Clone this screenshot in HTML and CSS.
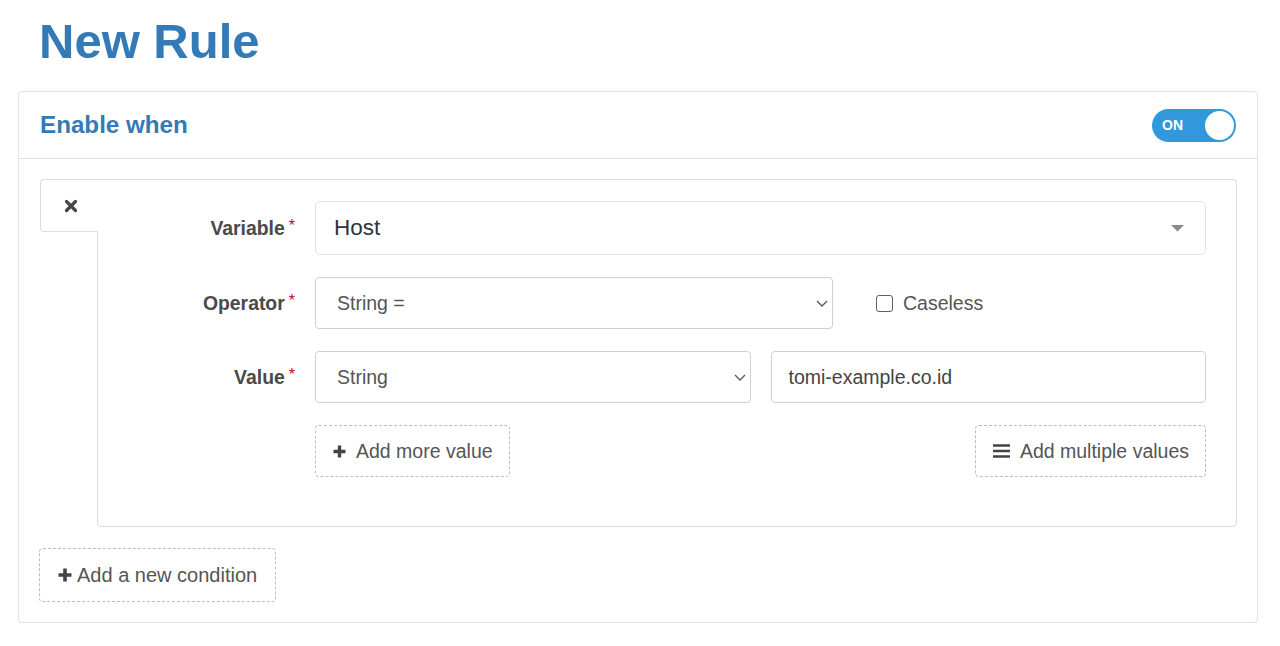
FILE: index.html
```html
<!DOCTYPE html>
<html lang="en">
<head>
<meta charset="utf-8">
<title>New Rule</title>
<link rel="stylesheet" href="styles.css">
</head>
<body>
<div class="page">
  <h1 class="title">New Rule</h1>
  <section class="panel">
    <header class="panel-head">
      <h2 class="panel-title">Enable when</h2>
      <div class="toggle"><span class="toggle-label">ON</span><span class="toggle-knob"></span></div>
    </header>
    <div class="panel-body">
      <div class="condition">
        <div class="cond-tab">
          <svg class="ico-x" width="14" height="14" viewBox="0 0 14 14"><path d="M2.5 2.5L11.5 11.5M11.5 2.5L2.5 11.5" stroke="#454545" stroke-width="3.2" stroke-linecap="round"/></svg>
        </div>
        <div class="cond-main">
          <div class="field-label">Variable<span class="req">*</span></div>
          <div class="field-ctrl">
            <div class="select select-lg">
              <span>Host</span>
              <svg width="13" height="7" viewBox="0 0 13 7"><polygon points="0,0 13,0 6.5,6.5" fill="#8a8a8a"/></svg>
            </div>
          </div>

          <div class="field-label">Operator<span class="req">*</span></div>
          <div class="field-ctrl">
            <div class="select select-md select-op">
              <span>String =</span>
              <svg class="chev" width="12" height="7" viewBox="0 0 12 7"><polyline points="1,1 6,6 11,1" fill="none" stroke="#555" stroke-width="1.3"/></svg>
            </div>
            <label class="check"><span class="check-box"></span>Caseless</label>
          </div>

          <div class="field-label">Value<span class="req">*</span></div>
          <div class="field-pair">
            <div class="select select-md">
              <span>String</span>
              <svg class="chev" width="12" height="7" viewBox="0 0 12 7"><polyline points="1,1 6,6 11,1" fill="none" stroke="#555" stroke-width="1.3"/></svg>
            </div>
            <div class="text-input">tomi-example.co.id</div>
          </div>

          <div class="field-label"></div>
          <div class="field-ctrl split">
            <button class="dash-btn">
              <svg width="13" height="13" viewBox="0 0 13 13"><path d="M6.5 0.5v12M0.5 6.5h12" stroke="#444" stroke-width="3.4"/></svg>
              Add more value
            </button>
            <button class="dash-btn">
              <svg width="17" height="14" viewBox="0 0 17 14"><path d="M0 1.5h17M0 7h17M0 12.5h17" stroke="#444" stroke-width="2.6"/></svg>
              Add multiple values
            </button>
          </div>
        </div>
      </div>
      <button class="dash-btn new-cond">
        <svg width="14" height="14" viewBox="0 0 14 14"><path d="M7 0.5v13M0.5 7h13" stroke="#444" stroke-width="3.6"/></svg>
        Add a new condition
      </button>
    </div>
  </section>
</div>
</body>
</html>
```

FILE: styles.css
```css
* { box-sizing: border-box; }

body {
  margin: 0;
  background: #fff;
  font-family: "Liberation Sans", Arial, Helvetica, sans-serif;
  color: #555;
}

.page {
  padding: 14px 22px 0 18px;
}

.title {
  margin: 0 0 22px 21px;
  font-size: 49px;
  line-height: 55px;
  font-weight: bold;
  color: #337ab7;
}

.panel {
  border: 1px solid #e4e4e4;
  border-radius: 4px;
  background: #fff;
  box-shadow: 0 1px 2px rgba(0, 0, 0, 0.05);
}

.panel-head {
  height: 67px;
  display: flex;
  align-items: center;
  justify-content: space-between;
  padding: 0 21px 0 21px;
  border-bottom: 1px solid #dedede;
}

.panel-title {
  margin: 0;
  font-size: 24.2px;
  font-weight: bold;
  color: #337ab7;
}

.toggle {
  width: 84px;
  height: 33px;
  border-radius: 17px;
  background: #3198dc;
  display: flex;
  align-items: center;
  justify-content: space-between;
  padding: 0 2px 0 10px;
}

.toggle-label {
  color: #fff;
  font-weight: bold;
  font-size: 14px;
}

.toggle-knob {
  width: 29px;
  height: 29px;
  border-radius: 50%;
  background: #fff;
}

.panel-body {
  padding: 20px 20px 20px 21px;
}

.condition {
  display: flex;
  align-items: flex-start;
}

.cond-tab {
  position: relative;
  z-index: 1;
  width: 58px;
  height: 53px;
  margin-right: -1px;
  border: 1px solid #dcdcdc;
  border-right: none;
  border-radius: 4px 0 0 4px;
  background: #fff;
  display: flex;
  align-items: center;
  justify-content: center;
  padding-left: 2px;
}

.cond-main {
  flex: 1;
  border: 1px solid #dcdcdc;
  border-radius: 0 4px 4px 4px;
  padding: 21px 30px 49px 0;
  display: grid;
  grid-template-columns: 197px 1fr;
  column-gap: 20px;
  row-gap: 22px;
}

.field-label {
  display: flex;
  align-items: center;
  justify-content: flex-end;
  font-size: 19.4px;
  font-weight: bold;
  color: #4a4a4a;
}

.req {
  color: #d0021b;
  font-size: 16px;
  margin-left: 4px;
  margin-bottom: 4px;
  font-weight: normal;
}

.field-ctrl {
  display: flex;
  align-items: center;
}

.field-pair {
  display: grid;
  grid-template-columns: 1fr 1fr;
  column-gap: 20px;
}

.field-ctrl.split { justify-content: space-between; }

.select {
  display: flex;
  align-items: center;
  justify-content: space-between;
  border: 1px solid #cfcfcf;
  border-radius: 4px;
  background: #fff;
}

.select-lg {
  flex: 1;
  height: 54px;
  padding: 0 21px 0 18px;
  font-size: 22.5px;
  color: #2c3440;
  border-color: #e3e3e3;
  border-radius: 5px;
}

.select-md {
  height: 52px;
  padding: 0 4px 0 21px;
  font-size: 19.5px;
  color: #555;
}

.select-op { width: 518px; }

.check {
  display: flex;
  align-items: center;
  margin-left: 43px;
  font-size: 19.5px;
  color: #555;
}

.check-box {
  width: 17px;
  height: 17px;
  border: 1.5px solid #5f5f5f;
  border-radius: 3px;
  margin-right: 10px;
}

.text-input {
  height: 52px;
  display: flex;
  align-items: center;
  border: 1px solid #cfcfcf;
  border-radius: 4px;
  padding: 0 17px;
  font-size: 19.5px;
  color: #444;
}

.dash-btn {
  display: inline-flex;
  align-items: center;
  gap: 10px;
  height: 52px;
  padding: 0 16px 0 17px;
  border: 1px dashed #bdbdbd;
  border-radius: 4px;
  background: #fff;
  font-family: inherit;
  font-size: 19.5px;
  color: #555;
}

.new-cond {
  margin-top: 21px;
  margin-left: -1px;
  height: 54px;
  gap: 5px;
  padding: 0 18px 0 18px;
  font-size: 20px;
}
```
